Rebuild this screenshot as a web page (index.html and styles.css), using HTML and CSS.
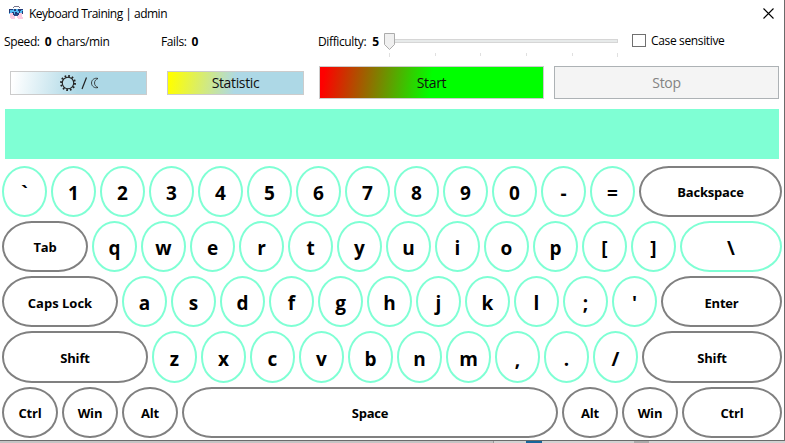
FILE: index.html
```
<!DOCTYPE html>
<html lang="en">
<head>
<meta charset="utf-8">
<title>Keyboard Training | admin</title>
<link rel="stylesheet" href="styles.css">
</head>
<body>
<main class="window">
  <header class="titlebar">
    <svg class="app-icon" width="15" height="14" viewBox="0 0 15 14" shape-rendering="crispEdges">
      <path d="M4 1h1V0h5v1h1v1h-1V1H5v1H4z" fill="#77758c"/>
      <path d="M0 3h14v5H0z" fill="#54b9f0"/>
      <path d="M0 3h4v1H1v3H0zM5 3h2v2H5zM9 3h5v1h-2v1H9zM3 6h2v3H3zM6 6h2v1h2V5h1v4H6zM13 5h1v3h-1z" fill="#253b78"/>
      <path d="M1 7h3v2h2v4H2v-1H1zM8 9h2V7h3v4h1v2H9v-1H8z" fill="#fbcbe0"/>
      <path d="M5 8h4v2H5z" fill="#2b4b87"/>
    </svg>
    <h1 class="title">Keyboard Training | admin</h1>
    <svg class="close" width="11" height="11" viewBox="0 0 11 11"><path d="M.5.5l10 10M10.500.5l-10 10" stroke="#000" stroke-width="1.100"/></svg>
  </header>
  <section class="status">
    <div class="stat"><span>Speed:</span><b>0</b><span>chars/min</span></div>
    <div class="stat"><span>Fails:</span><b>0</b></div>
    <div class="stat difficulty"><span>Difficulty:</span><b>5</b>
      <svg class="slider" width="236" height="26" viewBox="0 0 236 26">
        <rect x="1.500" y="6.500" width="232" height="3" fill="#e7eaea" stroke="#d6d6d6"/>
        <path d="M5.500 20v4M51.500 20v3M96.500 20v3M142.500 20v3M188.500 20v3M233.500 20v4" stroke="#e0e0e0"/>
        <path d="M.5.5h10v11l-5 5-5-5z" fill="#f0f0f0" stroke="#acacac"/>
      </svg>
    </div>
    <label class="check"><span class="box"></span><span>Case sensitive</span></label>
  </section>
  <section class="actions">
    <button class="btn small theme">
      <svg width="42" height="18" viewBox="0 0 42 18" fill="none" stroke="#222">
        <circle cx="8" cy="9" r="5.700" stroke-width="1.100"/>
        <circle cx="8" cy="9" r="7" stroke-width="1.900" stroke-dasharray="1.700 1.965"/>
        <path d="M22 15L26.500 3.500" stroke-width="1.200"/>
        <path d="M38 4.500c-3-1-6.500 1-6.500 4.500s3.500 5.500 6.500 4.500c-2-.8-3.500-2.300-3.500-4.500s1.500-3.700 3.500-4.500z" stroke-width=".8"/>
      </svg>
    </button>
    <button class="btn small statistic"><span>Statistic</span></button>
    <button class="btn start"><span>Start</span></button>
    <button class="btn stop" disabled><span>Stop</span></button>
  </section>
  <div class="typing"></div>
  <section class="keyboard">
    <div class="row"><kbd>`</kbd><kbd>1</kbd><kbd>2</kbd><kbd>3</kbd><kbd>4</kbd><kbd>5</kbd><kbd>6</kbd><kbd>7</kbd><kbd>8</kbd><kbd>9</kbd><kbd>0</kbd><kbd>-</kbd><kbd>=</kbd><kbd class="special fill">Backspace</kbd></div>
    <div class="row"><kbd class="special tab">Tab</kbd><kbd>q</kbd><kbd>w</kbd><kbd>e</kbd><kbd>r</kbd><kbd>t</kbd><kbd>y</kbd><kbd>u</kbd><kbd>i</kbd><kbd>o</kbd><kbd>p</kbd><kbd>[</kbd><kbd>]</kbd><kbd class="fill">\</kbd></div>
    <div class="row"><kbd class="special caps">Caps Lock</kbd><kbd>a</kbd><kbd>s</kbd><kbd>d</kbd><kbd>f</kbd><kbd>g</kbd><kbd>h</kbd><kbd>j</kbd><kbd>k</kbd><kbd>l</kbd><kbd>;</kbd><kbd>'</kbd><kbd class="special fill">Enter</kbd></div>
    <div class="row"><kbd class="special shift">Shift</kbd><kbd>z</kbd><kbd>x</kbd><kbd>c</kbd><kbd>v</kbd><kbd>b</kbd><kbd>n</kbd><kbd>m</kbd><kbd>,</kbd><kbd>.</kbd><kbd>/</kbd><kbd class="special fill">Shift</kbd></div>
    <div class="row"><kbd class="special mod">Ctrl</kbd><kbd class="special mod">Win</kbd><kbd class="special mod">Alt</kbd><kbd class="special fill">Space</kbd><kbd class="special mod">Alt</kbd><kbd class="special mod">Win</kbd><kbd class="special ctrl">Ctrl</kbd></div>
  </section>
</main>
<div class="backdrop"></div>
</body>
</html>
```
FILE: styles.css
```
* { box-sizing: border-box; }
body {
  margin: 0;
  height: 443px;
  overflow: hidden;
  background: #c4c4c4;
  font: 12px/16px "Open Sans", "Noto Sans", sans-serif;
  color: #000;
}
.window {
  width: 785px;
  height: 441px;
  background: #fff;
  border-right: 1px solid #6b6b6b;
  border-bottom: 1px solid #6b6b6b;
}
/* strip of the desktop that shows below the window */
.backdrop {
  height: 2px;
  background: linear-gradient(90deg, #c4c4c4 493px, #999 493px 494px, #d2d2d2 494px 526px, #17659b 526px 542px, #d2d2d2 542px 634px, #aaa 634px 649px, #d2d2d2 649px);
}
.titlebar { display: flex; height: 27px; padding: 6px 10px 0 9px; }
.title { margin: 0 auto 0 5px; font-size: 12px; font-weight: 400; letter-spacing: -0.5px; white-space: nowrap; }
.close { margin-top: 2px; }
.status {
  display: grid;
  grid-template-columns: 157px 157px 314px 1fr;
  height: 39px;
  padding: 6px 0 0 4px;
  white-space: nowrap;
}
.stat { display: flex; height: 18px; line-height: 18px; letter-spacing: -0.38px; }
.stat b { margin: 0 5px; letter-spacing: 0; }
.difficulty b { margin: 0 5px 0 6px; }
.slider { flex: none; }
.check { display: flex; line-height: 16px; letter-spacing: -0.35px; }
.box { width: 14px; height: 13px; margin: 1px 5px 0 0; border: 1px solid #707070; }
.actions {
  display: grid;
  grid-template-columns: 137px 137px 225px 225px;
  column-gap: 20px;
  align-items: center;
  height: 33px;
  padding-left: 10px;
}
.start { margin-left: -5px; width: 225px; }
.stop { margin-left: -15px; width: 225px; }
.btn {
  display: flex;
  align-items: center;
  justify-content: center;
  height: 33px;
  padding: 0;
  border: 1px solid #ccc;
  font: 14px/18px "Open Sans", "Noto Sans", sans-serif;
  letter-spacing: -0.35px;
  color: #111;
}
.btn span { padding-top: 1px; }
.small { height: 24px; }
.theme { background: linear-gradient(99deg, #fff 2%, #add8e6 50%); padding-left: 4px; }
.statistic { background: linear-gradient(99deg, #ff0 2%, #add8e6 50%); }
.btn.start { background: linear-gradient(98deg, #f00 2%, #0f0 50%); }
.btn.stop { background: #f4f4f4; border-color: #adb2b5; color: #838383; }
.typing { height: 50px; margin: 9.500px 5px 7px; background: #7fffd4; }
.keyboard { display: flex; flex-direction: column; gap: 4px; padding: 0 2px; }
.row { display: flex; gap: 4px; height: 51.300px; }
kbd {
  display: flex;
  flex: none;
  align-items: center;
  justify-content: center;
  width: 45px;
  padding-top: 3px;
  border: 2px solid #7fffd4;
  border-radius: 50%;
  background: #fff;
  font: 700 19px/26px "Open Sans", "Noto Sans", sans-serif;
}
.special { border-color: #808080; padding-top: 2px; font-size: 13px; letter-spacing: -0.2px; white-space: nowrap; }
.fill { flex: 1; }
.fill, .tab, .caps, .shift, .ctrl { border-radius: 30px / 50%; }
.tab { width: 86px; }
.caps { width: 116px; letter-spacing: 0; }
.shift { width: 146px; }
.mod { width: 56px; }
.ctrl { width: 100px; }
```
